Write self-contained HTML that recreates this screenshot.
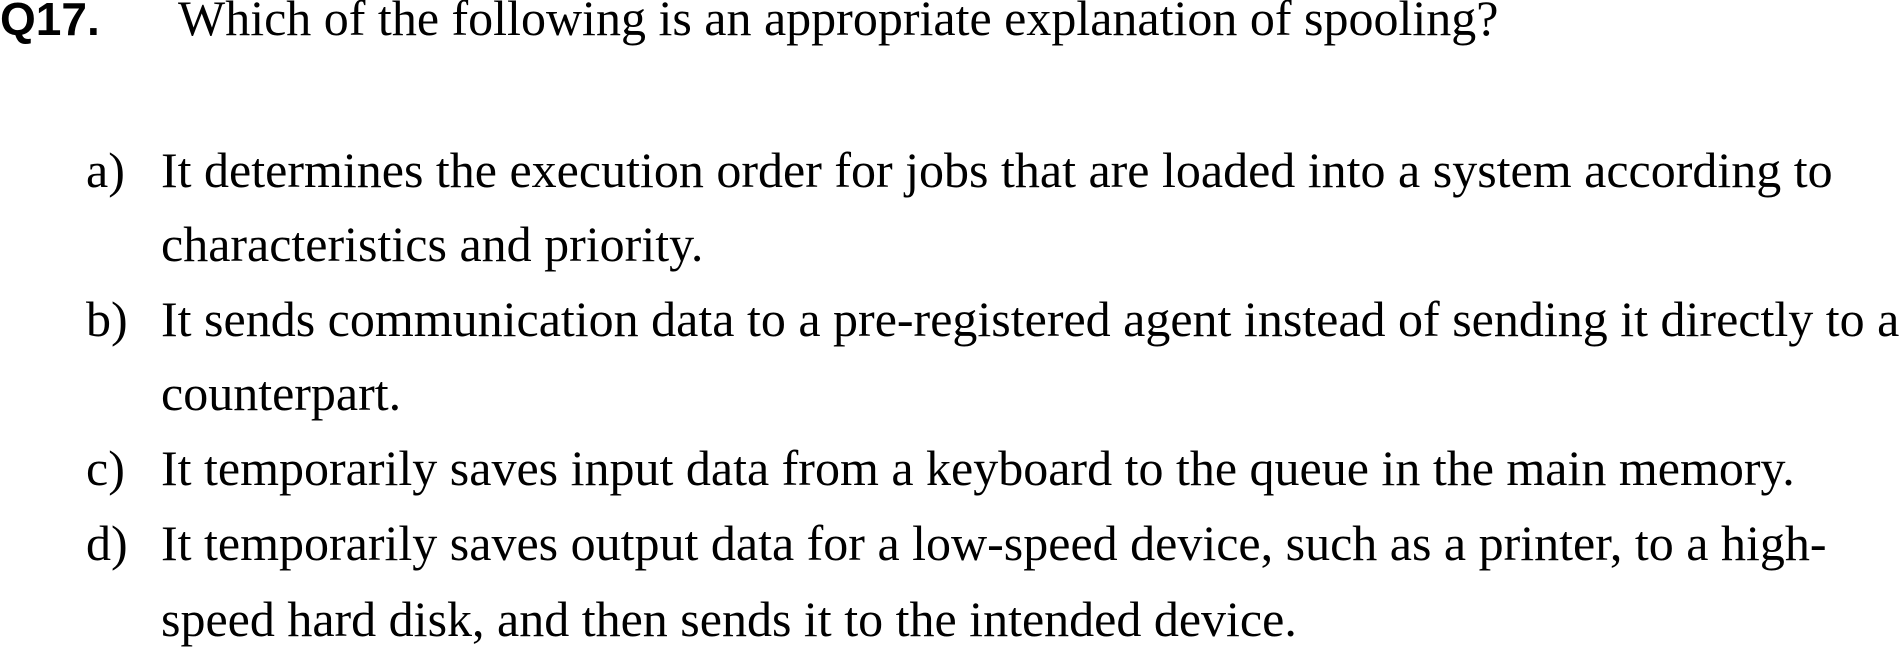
<!DOCTYPE html>
<html><head><meta charset="utf-8"><style>
html,body{margin:0;padding:0;background:#fff;width:1899px;height:647px;overflow:hidden;}
.t{position:absolute;white-space:nowrap;font-family:"Liberation Serif",serif;font-size:50px;line-height:1;color:#000;}
.q{position:absolute;white-space:nowrap;font-family:"Liberation Sans",sans-serif;font-weight:bold;font-size:46px;line-height:1;color:#000;}
</style></head><body>
<div class="q" style="left:0;top:-4px">Q17.</div>
<div class="t" style="left:178px;top:-7px">Which of the following is an appropriate explanation of spooling?</div>

<div class="t" style="left:86px;top:145px">a)</div>
<div class="t" style="left:161px;top:145px">It determines the execution order for jobs that are loaded into a system according to</div>
<div class="t" style="left:161px;top:219px">characteristics and priority.</div>

<div class="t" style="left:86px;top:294px">b)</div>
<div class="t" style="left:161px;top:294px">It sends communication data to a pre-registered agent instead of sending it directly to a</div>
<div class="t" style="left:161px;top:368px">counterpart.</div>

<div class="t" style="left:86px;top:443px">c)</div>
<div class="t" style="left:161px;top:443px">It temporarily saves input data from a keyboard to the queue in the main memory.</div>

<div class="t" style="left:86px;top:518px">d)</div>
<div class="t" style="left:161px;top:518px">It temporarily saves output data for a low-speed device, such as a printer, to a high-</div>
<div class="t" style="left:161px;top:594px">speed hard disk, and then sends it to the intended device.</div>
</body></html>
